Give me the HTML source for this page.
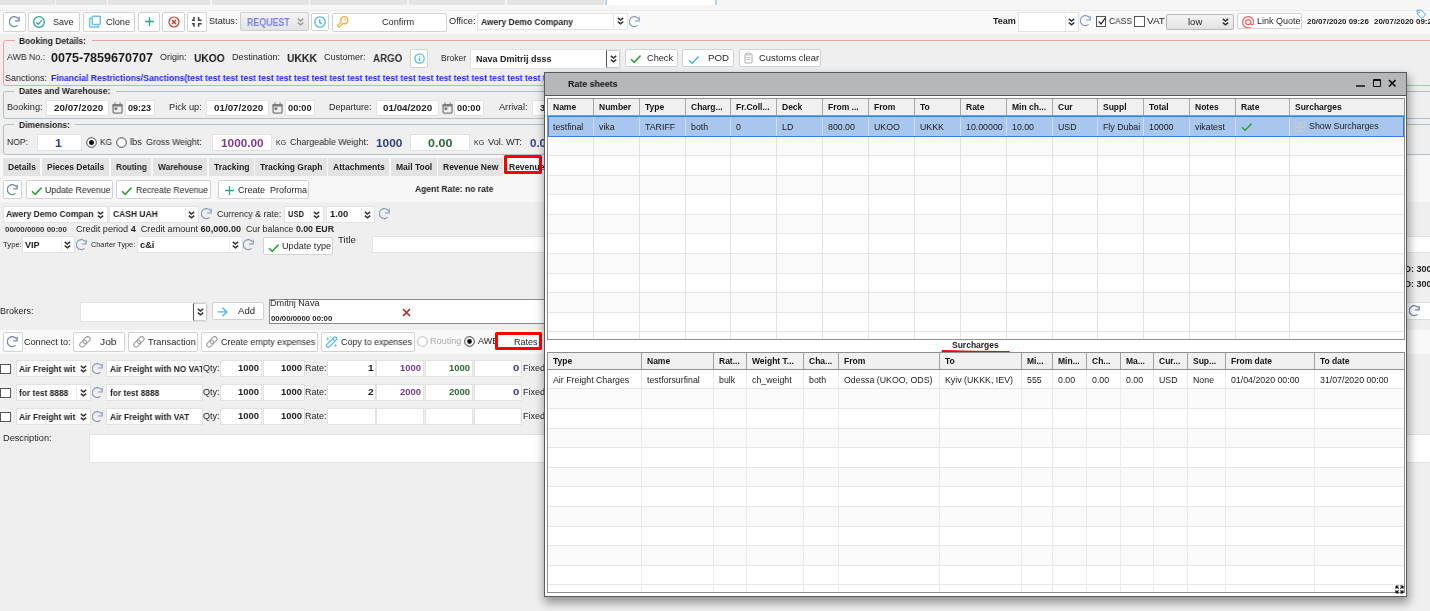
<!DOCTYPE html>
<html><head><meta charset="utf-8"><style>
html,body{margin:0;padding:0;}
body{width:1430px;height:611px;overflow:hidden;position:relative;background:#efefef;font-family:"Liberation Sans",sans-serif;}
#root{position:absolute;left:0;top:0;width:1430px;height:611px;overflow:hidden;}
#root>div,#root>span,#root>svg{position:absolute;}
.t{white-space:nowrap;transform-origin:0 50%;will-change:transform;}
</style></head><body><div id="root">
<div style="left:0.0px;top:0.0px;width:1430.0px;height:611.0px;background:#efefef"></div>
<div style="left:0.0px;top:0.0px;width:1430.0px;height:10.0px;background:#f6f6f6"></div>
<div style="left:0.0px;top:9.5px;width:1430.0px;height:1.0px;background:#ebebeb"></div>
<div style="left:0.0px;top:0.0px;width:55.0px;height:4.5px;background:#e4e4e4"></div>
<div style="left:56.0px;top:0.0px;width:50.5px;height:4.5px;background:#e4e4e4"></div>
<div style="left:108.0px;top:0.0px;width:102.0px;height:4.5px;background:#e4e4e4"></div>
<div style="left:212.0px;top:0.0px;width:96.5px;height:4.5px;background:#e4e4e4"></div>
<div style="left:310.0px;top:0.0px;width:97.0px;height:4.5px;background:#e4e4e4"></div>
<div style="left:408.5px;top:0.0px;width:96.5px;height:4.5px;background:#e4e4e4"></div>
<div style="left:507.0px;top:0.0px;width:97.0px;height:4.5px;background:#e4e4e4"></div>
<div style="left:605.0px;top:0.0px;width:112.0px;height:4.5px;background:#fff;border-left:2px solid #a8d8f6;border-right:2px solid #a8d8f6;box-sizing:border-box"></div>
<div style="left:0.0px;top:10.5px;width:1430.0px;height:23.0px;background:#f9f9f9"></div>
<div style="left:3.0px;top:12.0px;width:22.5px;height:19.5px;background:#fff;border:1px solid #d2d2d2;border-radius:2px;box-sizing:border-box"></div>
<svg style="left:8.5px;top:16.0px;width:12px;height:12px" viewBox="0 0 12 12"><path d="M8.6 9.4A5 5 0 1 1 9.7 3.2" fill="none" stroke="#7385b0" stroke-width="1.25"/><path d="M10.2 0.8V4.9H6.1" fill="none" stroke="#7385b0" stroke-width="1.25"/></svg>
<div style="left:28.0px;top:12.0px;width:52.0px;height:19.5px;background:#fff;border:1px solid #d2d2d2;border-radius:2px;box-sizing:border-box"></div>
<svg style="left:33.4px;top:15.7px;width:12px;height:12px" viewBox="0 0 12 12"><circle cx="6" cy="6" r="5.3" fill="none" stroke="#2aa59a" stroke-width="1.3"/><path d="M3.2 6.3L5.2 8.2 8.7 4.4" fill="none" stroke="#2aa59a" stroke-width="1.3"/></svg>
<span class="t" id="t1" style="transform:scaleX(0.979);margin-left:-0.5px;left:53.0px;top:16.5px;font-size:9px;line-height:11.7px;font-weight:400;color:#262626;">Save</span>
<div style="left:83.0px;top:12.0px;width:52.0px;height:19.5px;background:#fff;border:1px solid #d2d2d2;border-radius:2px;box-sizing:border-box"></div>
<svg style="left:87.7px;top:15.3px;width:13px;height:13px" viewBox="0 0 13 13"><rect x="4.2" y="1.2" width="8.1" height="8.3" rx="0.9" fill="none" stroke="#6cc0f5" stroke-width="1.5"/><path d="M3.6 3.2H1.6V11.2c0 .6.3.9.9.9H10.4V10.2" fill="none" stroke="#6cc0f5" stroke-width="1.5"/></svg>
<span class="t" id="t2" style="transform:scaleX(1.024);margin-left:-0.5px;left:106.0px;top:16.5px;font-size:9px;line-height:11.7px;font-weight:400;color:#262626;">Clone</span>
<div style="left:137.5px;top:12.0px;width:22.1px;height:19.5px;background:#fff;border:1px solid #d2d2d2;border-radius:2px;box-sizing:border-box"></div>
<svg style="left:143.5px;top:16.0px;width:11px;height:11px" viewBox="0 0 11 11"><path d="M5.5 1V10M1 5.5H10" stroke="#26a69a" stroke-width="1.3"/></svg>
<div style="left:162.0px;top:12.0px;width:22.5px;height:19.5px;background:#fff;border:1px solid #d2d2d2;border-radius:2px;box-sizing:border-box"></div>
<svg style="left:167.5px;top:16.0px;width:12px;height:12px" viewBox="0 0 12 12"><circle cx="6" cy="6" r="5" fill="none" stroke="#c0392b" stroke-width="1.2"/><path d="M4 4L8 8M8 4L4 8" stroke="#c0392b" stroke-width="1.4"/></svg>
<div style="left:187.0px;top:12.0px;width:19.5px;height:19.5px;background:#fff;border:1px solid #d2d2d2;border-radius:2px;box-sizing:border-box"></div>
<svg style="left:190.0px;top:15.0px;width:14px;height:14px" viewBox="0 0 14 14"><path d="M4 2V5.2H1.9M8.6 2V5.2H11.7M1.9 8.7H4V11.7M11.7 8.7H8.6V11.7" fill="none" stroke="#444" stroke-width="1.5"/></svg>
<span class="t" id="t3" style="transform:scaleX(1.017);margin-left:-0.5px;left:209.0px;top:15.5px;font-size:9px;line-height:11.7px;font-weight:400;color:#262626;">Status:</span>
<div style="left:239.6px;top:12.2px;width:69.2px;height:19.3px;background:linear-gradient(#f4f4f5,#e3e3e6);border:1px solid #cdcdcd;border-radius:2px;box-sizing:border-box"></div>
<span class="t" id="t4" style="transform:scaleX(0.883);margin-left:-0.6px;left:247.5px;top:15.5px;font-size:10px;line-height:13.0px;font-weight:700;color:#8184e0;">REQUEST</span>
<svg style="left:297.0px;top:18.0px;width:7px;height:8px" viewBox="0 0 7 8"><path d="M0.8 0.9L3.5 3.1 6.2 0.9M0.8 4.6L3.5 6.8 6.2 4.6" fill="none" stroke="#999" stroke-width="1.5"/></svg>
<div style="left:311.3px;top:12.5px;width:17.4px;height:18.5px;background:#fff;border:1px solid #d2d2d2;border-radius:2px;box-sizing:border-box"></div>
<svg style="left:313.8px;top:15.8px;width:12px;height:12px" viewBox="0 0 12 12"><circle cx="6" cy="6" r="5.2" fill="none" stroke="#4fb6f0" stroke-width="1.3"/><path d="M5.7 3.2V6.6L7.8 8.0" fill="none" stroke="#4fb6f0" stroke-width="1.4"/></svg>
<div style="left:331.5px;top:12.5px;width:115.0px;height:19.0px;background:#fff;border:1px solid #d2d2d2;border-radius:2px;box-sizing:border-box"></div>
<svg style="left:336.0px;top:14.0px;width:14px;height:14px" viewBox="0 0 14 14"><path d="M7.6 7.2L3.0 11.8" stroke="#ffa53a" stroke-width="3.6" stroke-linecap="round"/><circle cx="8.3" cy="6.2" r="4.2" fill="#ffa53a"/><path d="M7.6 7.2L3.0 11.8" stroke="#fff" stroke-width="1.2" stroke-linecap="round"/><circle cx="8.3" cy="6.2" r="2.9" fill="#fff"/><circle cx="9.1" cy="5.4" r="0.8" fill="#ffa53a"/></svg>
<span class="t" id="t5" style="transform:scaleX(1.018);margin-left:-0.5px;left:382.0px;top:16.5px;font-size:9px;line-height:11.7px;font-weight:400;color:#262626;">Confirm</span>
<span class="t" id="t6" style="transform:scaleX(1.024);margin-left:-0.5px;left:449.6px;top:15.5px;font-size:9px;line-height:11.7px;font-weight:400;color:#262626;">Office:</span>
<div style="left:477.1px;top:12.6px;width:151.2px;height:17.5px;background:#fff;border:1px solid #e2e2e2;box-sizing:border-box"></div>
<div style="left:613.3px;top:14.3px;width:1.0px;height:14.1px;background:#e6e6e6"></div>
<svg style="left:617.0px;top:17.4px;width:7px;height:8px" viewBox="0 0 7 8"><path d="M0.8 0.9L3.5 3.1 6.2 0.9M0.8 4.6L3.5 6.8 6.2 4.6" fill="none" stroke="#333" stroke-width="1.5"/></svg>
<span class="t" id="t7" style="transform:scaleX(0.941);margin-left:-0.5px;left:481.0px;top:16.5px;font-size:9px;line-height:11.7px;font-weight:700;color:#222;">Awery Demo Company</span>
<svg style="left:628.5px;top:15.7px;width:12px;height:12px" viewBox="0 0 12 12"><path d="M8.6 9.4A5 5 0 1 1 9.7 3.2" fill="none" stroke="#8493bb" stroke-width="1.05"/><path d="M10.2 0.8V4.9H6.1" fill="none" stroke="#8493bb" stroke-width="1.05"/></svg>
<span class="t" id="t8" style="transform:scaleX(1.002);margin-left:-0.5px;left:993.5px;top:15.5px;font-size:9px;line-height:11.7px;font-weight:700;color:#222;">Team</span>
<div style="left:1017.6px;top:11.8px;width:61.3px;height:20.4px;background:#fff;border:1px solid #e2e2e2;box-sizing:border-box"></div>
<div style="left:1064.5px;top:13.5px;width:1.0px;height:17.0px;background:#e6e6e6"></div>
<svg style="left:1067.8px;top:18.0px;width:7px;height:8px" viewBox="0 0 7 8"><path d="M0.8 0.9L3.5 3.1 6.2 0.9M0.8 4.6L3.5 6.8 6.2 4.6" fill="none" stroke="#333" stroke-width="1.5"/></svg>
<svg style="left:1079.5px;top:15.0px;width:12px;height:12px" viewBox="0 0 12 12"><path d="M8.6 9.4A5 5 0 1 1 9.7 3.2" fill="none" stroke="#8493bb" stroke-width="1.05"/><path d="M10.2 0.8V4.9H6.1" fill="none" stroke="#8493bb" stroke-width="1.05"/></svg>
<div style="left:1095.8px;top:16.4px;width:10.2px;height:10.4px;background:#fff;border:1px solid #555;box-sizing:border-box"></div>
<svg style="left:1096.5px;top:16.0px;width:10px;height:10px" viewBox="0 0 10 10"><path d="M1.8 5.3L4 8 8.6 1.6" fill="none" stroke="#222" stroke-width="1.2"/></svg>
<span class="t" id="t9" style="transform:scaleX(0.941);margin-left:-0.5px;left:1109.0px;top:15.5px;font-size:9px;line-height:11.7px;font-weight:400;color:#262626;">CASS</span>
<div style="left:1134.0px;top:16.4px;width:11.0px;height:10.4px;background:#fff;border:1px solid #555;box-sizing:border-box"></div>
<span class="t" id="t10" style="transform:scaleX(1.106);margin-left:-0.5px;left:1147.0px;top:15.5px;font-size:9px;line-height:11.7px;font-weight:400;color:#262626;">VAT</span>
<div style="left:1166.0px;top:13.5px;width:67.6px;height:16.0px;background:linear-gradient(#f4f4f4,#e2e2e2);border:1px solid #b9b9b9;border-radius:2px;box-sizing:border-box"></div>
<span class="t" id="t11" style="transform:scaleX(1.057);margin-left:-0.5px;left:1188.3px;top:16.5px;font-size:9px;line-height:11.7px;font-weight:400;color:#222;">low</span>
<svg style="left:1222.0px;top:17.5px;width:7px;height:8px" viewBox="0 0 7 8"><path d="M0.8 0.9L3.5 3.1 6.2 0.9M0.8 4.6L3.5 6.8 6.2 4.6" fill="none" stroke="#333" stroke-width="1.5"/></svg>
<div style="left:1236.5px;top:13.4px;width:65.9px;height:16.0px;background:#fff;border:1px solid #d2d2d2;border-radius:2px;box-sizing:border-box"></div>
<svg style="left:1241.6px;top:15.5px;width:12.4px;height:12.4px" viewBox="2 2 20 20"><path fill="#f25c5c" d="M12 2C6.48 2 2 6.48 2 12s4.48 10 10 10h5v-2h-5c-4.34 0-8-3.66-8-8s3.66-8 8-8 8 3.66 8 8v1.43c0 .79-.71 1.57-1.5 1.57s-1.5-.78-1.5-1.57V12c0-2.76-2.24-5-5-5s-5 2.24-5 5 2.24 5 5 5c1.38 0 2.64-.56 3.540-1.47.65.89 1.77 1.47 2.96 1.47 1.97 0 3.5-1.6 3.5-3.57V12c0-5.52-4.48-10-10-10zm0 13c-1.66 0-3-1.34-3-3s1.34-3 3-3 3 1.340 3 3-1.34 3-3 3z"/></svg>
<span class="t" id="t12" style="transform:scaleX(0.990);margin-left:-0.5px;left:1257.0px;top:15.5px;font-size:9px;line-height:11.7px;font-weight:400;color:#262626;">Link Quote</span>
<span class="t" id="t13" style="transform:scaleX(1.052);margin-left:-0.4px;left:1307.0px;top:16.5px;font-size:7.5px;line-height:9.8px;font-weight:700;color:#222;">20/07/2020 09:26</span>
<span class="t" id="t14" style="transform:scaleX(1.059);margin-left:-0.4px;left:1374.6px;top:16.5px;font-size:7.5px;line-height:9.8px;font-weight:700;color:#222;">20/07/2020 09:26</span>
<svg style="left:1416.0px;top:8.5px;width:11px;height:10px" viewBox="0 0 11 10"><path d="M1 1.2H5.3L9.8 5.6 5.9 9.5 1.4 5.1Z" fill="none" stroke="#42a5f5" stroke-width="1"/><circle cx="3.4" cy="3.4" r="0.7" fill="#42a5f5"/></svg>
<div style="left:3.0px;top:39.9px;width:1437.0px;height:46.0px;border:1px solid #eea3a3;border-radius:3px;box-sizing:border-box"></div>
<div style="left:14.5px;top:38.0px;width:77.5px;height:5.0px;background:#efefef"></div>
<span class="t" id="t15" style="transform:scaleX(0.942);margin-left:-0.5px;left:19.8px;top:35.5px;font-size:9px;line-height:11.7px;font-weight:700;color:#222;">Booking Details:</span>
<span class="t" id="t16" style="transform:scaleX(0.972);margin-left:-0.5px;left:7.0px;top:51.5px;font-size:9px;line-height:11.7px;font-weight:400;color:#262626;">AWB No.:</span>
<span class="t" id="t17" style="transform:scaleX(1.005);margin-left:-0.8px;left:52.0px;top:49.5px;font-size:12.5px;line-height:16.2px;font-weight:700;color:#1a1a1a;">0075-7859670707</span>
<span class="t" id="t18" style="transform:scaleX(0.995);margin-left:-0.5px;left:160.7px;top:51.5px;font-size:9px;line-height:11.7px;font-weight:400;color:#262626;">Origin:</span>
<span class="t" id="t19" style="transform:scaleX(0.892);margin-left:-0.7px;left:194.6px;top:50.5px;font-size:11.5px;line-height:15.0px;font-weight:700;color:#1a1a1a;">UKOO</span>
<span class="t" id="t20" style="transform:scaleX(1.012);margin-left:-0.5px;left:232.6px;top:51.5px;font-size:9px;line-height:11.7px;font-weight:400;color:#262626;">Destination:</span>
<span class="t" id="t21" style="transform:scaleX(0.899);margin-left:-0.7px;left:288.0px;top:50.5px;font-size:11.5px;line-height:15.0px;font-weight:700;color:#1a1a1a;">UKKK</span>
<span class="t" id="t22" style="transform:scaleX(0.992);margin-left:-0.5px;left:324.9px;top:51.5px;font-size:9px;line-height:11.7px;font-weight:400;color:#262626;">Customer:</span>
<span class="t" id="t23" style="transform:scaleX(0.852);margin-left:-0.7px;left:374.0px;top:50.5px;font-size:11.5px;line-height:15.0px;font-weight:700;color:#333;">ARGO</span>
<div style="left:410.2px;top:49.3px;width:17.4px;height:18.3px;background:#fff;border:1px solid #d2d2d2;border-radius:2px;box-sizing:border-box"></div>
<svg style="left:413.7px;top:53.1px;width:11px;height:11px" viewBox="0 0 11 11"><circle cx="5.5" cy="5.5" r="4.7" fill="none" stroke="#56bdf0" stroke-width="1.3"/><path d="M5.5 4.7V8.2" stroke="#56bdf0" stroke-width="1.5"/><circle cx="5.5" cy="3.3" r="0.8" fill="#56bdf0"/></svg>
<span class="t" id="t24" style="transform:scaleX(0.991);margin-left:-0.5px;left:441.7px;top:52.5px;font-size:8.5px;line-height:11.1px;font-weight:400;color:#262626;">Broker</span>
<div style="left:469.9px;top:49.1px;width:151.0px;height:19.6px;background:#fff;border:1px solid #e2e2e2;box-sizing:border-box"></div>
<div style="left:606.2px;top:49.8px;width:14.0px;height:18.2px;border:1px solid #cfcfcf;border-left:1px solid #555;border-radius:0 2px 2px 0;box-sizing:border-box;background:#fff"></div>
<svg style="left:609.7px;top:54.9px;width:7px;height:8px" viewBox="0 0 7 8"><path d="M0.8 0.9L3.5 3.1 6.2 0.9M0.8 4.6L3.5 6.8 6.2 4.6" fill="none" stroke="#333" stroke-width="1.5"/></svg>
<span class="t" id="t25" style="transform:scaleX(1.000);margin-left:-0.5px;left:476.5px;top:53.5px;font-size:9px;line-height:11.7px;font-weight:700;color:#222;">Nava Dmitrij dsss</span>
<div style="left:625.0px;top:49.2px;width:52.6px;height:18.2px;background:#fff;border:1px solid #d2d2d2;border-radius:2px;box-sizing:border-box"></div>
<svg style="left:630.3px;top:52.6px;width:11px;height:11px" viewBox="0 0 11 11"><path d="M1 6.2L4.2 9.3 10.6 2.6" fill="none" stroke="#2aa336" stroke-width="1.6"/></svg>
<span class="t" id="t26" style="transform:scaleX(1.022);margin-left:-0.5px;left:647.0px;top:52.5px;font-size:9px;line-height:11.7px;font-weight:400;color:#262626;">Check</span>
<div style="left:682.3px;top:49.2px;width:52.0px;height:18.2px;background:#fff;border:1px solid #d2d2d2;border-radius:2px;box-sizing:border-box"></div>
<svg style="left:688.0px;top:53.5px;width:11px;height:11px" viewBox="0 0 11 11"><path d="M1 6.2L4.2 9.3 10.6 2.6" fill="none" stroke="#4fb3ef" stroke-width="1.4"/></svg>
<span class="t" id="t27" style="transform:scaleX(1.080);margin-left:-0.5px;left:708.0px;top:52.5px;font-size:9px;line-height:11.7px;font-weight:400;color:#262626;">POD</span>
<div style="left:739.0px;top:49.2px;width:81.8px;height:18.2px;background:#fff;border:1px solid #d2d2d2;border-radius:2px;box-sizing:border-box"></div>
<svg style="left:743.5px;top:52.0px;width:9px;height:12px" viewBox="0 0 9 12"><rect x="1" y="2" width="7" height="9" rx="0.8" fill="none" stroke="#aaa" stroke-width="1"/><rect x="3" y="1" width="3" height="2" fill="#fff" stroke="#aaa" stroke-width="0.8"/><path d="M2.6 5.5H6.4M2.6 7.5H6.4" stroke="#aaa" stroke-width="0.8"/></svg>
<span class="t" id="t28" style="transform:scaleX(1.045);margin-left:-0.5px;left:759.0px;top:52.5px;font-size:9px;line-height:11.7px;font-weight:400;color:#262626;">Customs clear</span>
<span class="t" id="t29" style="transform:scaleX(1.001);margin-left:-0.5px;left:5.0px;top:72.5px;font-size:9px;line-height:11.7px;font-weight:400;color:#262626;">Sanctions:</span>
<span class="t" id="t30" style="left:51.0px;top:72.5px;font-size:9px;line-height:11.7px;font-weight:700;color:#1f1fff;white-space:nowrap;transform:scaleX(0.96)">Financial Restrictions/Sanctions(test test test test test test test test test test test test test test test test test test test test test test test test test</span>
<div style="left:3.0px;top:91.3px;width:1437.0px;height:27.8px;border:1px solid #b3bec6;border-radius:3px;box-sizing:border-box"></div>
<div style="left:14.0px;top:89.0px;width:102.0px;height:5.0px;background:#efefef"></div>
<span class="t" id="t31" style="transform:scaleX(0.943);margin-left:-0.5px;left:19.6px;top:85.5px;font-size:9px;line-height:11.7px;font-weight:700;color:#222;">Dates and Warehouse:</span>
<span class="t" id="t32" style="transform:scaleX(1.016);margin-left:-0.5px;left:7.0px;top:101.5px;font-size:9px;line-height:11.7px;font-weight:400;color:#262626;">Booking:</span>
<div style="left:46.3px;top:100.3px;width:63.1px;height:15.7px;background:#fff;border:1px solid #e2e2e2;box-sizing:border-box"></div>
<span class="t" id="t33" style="transform:scaleX(1.090);margin-left:-0.5px;left:54.0px;top:102.5px;font-size:9px;line-height:11.7px;font-weight:700;color:#222;">20/07/2020</span>
<svg style="left:112.0px;top:102.0px;width:11px;height:12px" viewBox="0 0 11 12"><rect x="1.1" y="2.6" width="8.9" height="8.5" rx="1" fill="none" stroke="#7d7d7d" stroke-width="1.3"/><rect x="0.6" y="2" width="9.9" height="2.5" fill="#7d7d7d"/><path d="M3 0.3V2.5M8.1 0.3V2.5" stroke="#7d7d7d" stroke-width="1"/><rect x="2.5" y="5.4" width="2.8" height="2.6" fill="#7d7d7d"/></svg>
<div style="left:125.0px;top:100.3px;width:29.7px;height:15.7px;background:#fff;border:1px solid #e2e2e2;box-sizing:border-box"></div>
<span class="t" id="t34" style="transform:scaleX(1.002);margin-left:-0.5px;left:128.3px;top:102.5px;font-size:9px;line-height:11.7px;font-weight:700;color:#222;">09:23</span>
<span class="t" id="t35" style="transform:scaleX(1.021);margin-left:-0.5px;left:169.4px;top:101.5px;font-size:9px;line-height:11.7px;font-weight:400;color:#262626;">Pick up:</span>
<div style="left:206.3px;top:100.3px;width:63.2px;height:15.7px;background:#fff;border:1px solid #e2e2e2;box-sizing:border-box"></div>
<span class="t" id="t36" style="transform:scaleX(1.090);margin-left:-0.5px;left:214.0px;top:102.5px;font-size:9px;line-height:11.7px;font-weight:700;color:#222;">01/07/2020</span>
<svg style="left:271.8px;top:102.0px;width:11px;height:12px" viewBox="0 0 11 12"><rect x="1.1" y="2.6" width="8.9" height="8.5" rx="1" fill="none" stroke="#7d7d7d" stroke-width="1.3"/><rect x="0.6" y="2" width="9.9" height="2.5" fill="#7d7d7d"/><path d="M3 0.3V2.5M8.1 0.3V2.5" stroke="#7d7d7d" stroke-width="1"/><rect x="2.5" y="5.4" width="2.8" height="2.6" fill="#7d7d7d"/></svg>
<div style="left:284.9px;top:100.3px;width:29.8px;height:15.7px;background:#fff;border:1px solid #e2e2e2;box-sizing:border-box"></div>
<span class="t" id="t37" style="transform:scaleX(1.024);margin-left:-0.5px;left:288.0px;top:102.5px;font-size:9px;line-height:11.7px;font-weight:700;color:#222;">00:00</span>
<span class="t" id="t38" style="transform:scaleX(0.992);margin-left:-0.5px;left:329.6px;top:101.5px;font-size:9px;line-height:11.7px;font-weight:400;color:#262626;">Departure:</span>
<div style="left:375.9px;top:100.3px;width:63.1px;height:15.7px;background:#fff;border:1px solid #e2e2e2;box-sizing:border-box"></div>
<span class="t" id="t39" style="transform:scaleX(1.090);margin-left:-0.5px;left:383.5px;top:102.5px;font-size:9px;line-height:11.7px;font-weight:700;color:#222;">01/04/2020</span>
<svg style="left:441.6px;top:102.0px;width:11px;height:12px" viewBox="0 0 11 12"><rect x="1.1" y="2.6" width="8.9" height="8.5" rx="1" fill="none" stroke="#7d7d7d" stroke-width="1.3"/><rect x="0.6" y="2" width="9.9" height="2.5" fill="#7d7d7d"/><path d="M3 0.3V2.5M8.1 0.3V2.5" stroke="#7d7d7d" stroke-width="1"/><rect x="2.5" y="5.4" width="2.8" height="2.6" fill="#7d7d7d"/></svg>
<div style="left:454.3px;top:100.3px;width:30.1px;height:15.7px;background:#fff;border:1px solid #e2e2e2;box-sizing:border-box"></div>
<span class="t" id="t40" style="transform:scaleX(1.024);margin-left:-0.5px;left:457.8px;top:102.5px;font-size:9px;line-height:11.7px;font-weight:700;color:#222;">00:00</span>
<span class="t" id="t41" style="transform:scaleX(1.017);margin-left:-0.5px;left:499.4px;top:101.5px;font-size:9px;line-height:11.7px;font-weight:400;color:#262626;">Arrival:</span>
<div style="left:532.2px;top:100.3px;width:68.5px;height:15.7px;background:#fff;border:1px solid #e2e2e2;box-sizing:border-box"></div>
<span class="t" id="t42" style="left:539.5px;top:102.5px;font-size:9px;line-height:11.7px;font-weight:700;color:#222;">31/07/2020</span>
<div style="left:3.0px;top:124.4px;width:1437.0px;height:30.4px;border:1px solid #b3bec6;border-radius:3px;box-sizing:border-box"></div>
<div style="left:14.0px;top:122.0px;width:61.0px;height:5.0px;background:#efefef"></div>
<span class="t" id="t43" style="transform:scaleX(0.944);margin-left:-0.5px;left:19.6px;top:119.5px;font-size:9px;line-height:11.7px;font-weight:700;color:#222;">Dimensions:</span>
<span class="t" id="t44" style="transform:scaleX(0.958);margin-left:-0.5px;left:7.0px;top:136.5px;font-size:9px;line-height:11.7px;font-weight:400;color:#262626;">NOP:</span>
<div style="left:37.1px;top:134.3px;width:44.5px;height:16.6px;background:#fff;border:1px solid #e2e2e2;box-sizing:border-box"></div>
<span class="t" id="t45" style="transform:scaleX(1.113);margin-left:-0.7px;left:56.0px;top:135.5px;font-size:11px;line-height:14.3px;font-weight:700;color:#2e3d8f;">1</span>
<svg style="left:86.0px;top:136.5px;width:11px;height:11px" viewBox="0 0 11 11"><circle cx="5.5" cy="5.5" r="4.8" fill="#fff" stroke="#333" stroke-width="0.9"/><circle cx="5.5" cy="5.5" r="2.5" fill="#111"/></svg>
<span class="t" id="t46" style="transform:scaleX(0.928);margin-left:-0.5px;left:100.0px;top:136.5px;font-size:9px;line-height:11.7px;font-weight:400;color:#262626;">KG</span>
<svg style="left:116.0px;top:136.5px;width:11px;height:11px" viewBox="0 0 11 11"><circle cx="5.5" cy="5.5" r="4.8" fill="#fff" stroke="#333" stroke-width="0.9"/></svg>
<span class="t" id="t47" style="transform:scaleX(1.049);margin-left:-0.5px;left:130.0px;top:136.5px;font-size:9px;line-height:11.7px;font-weight:400;color:#262626;">lbs</span>
<span class="t" id="t48" style="transform:scaleX(0.983);margin-left:-0.5px;left:146.9px;top:136.5px;font-size:9px;line-height:11.7px;font-weight:400;color:#262626;">Gross Weight:</span>
<div style="left:212.1px;top:134.3px;width:59.8px;height:16.6px;background:#fff;border:1px solid #e2e2e2;box-sizing:border-box"></div>
<span class="t" id="t49" style="transform:scaleX(1.027);margin-left:-0.7px;left:221.5px;top:135.5px;font-size:11.5px;line-height:15.0px;font-weight:700;color:#7d3a8a;">1000.00</span>
<span class="t" id="t50" style="transform:scaleX(1.072);margin-left:-0.4px;left:276.7px;top:138.5px;font-size:6.5px;line-height:8.5px;font-weight:400;color:#262626;">KG</span>
<span class="t" id="t51" style="transform:scaleX(0.987);margin-left:-0.5px;left:290.5px;top:136.5px;font-size:9px;line-height:11.7px;font-weight:400;color:#262626;">Chargeable Weight:</span>
<span class="t" id="t52" style="transform:scaleX(1.027);margin-left:-0.7px;left:376.6px;top:135.5px;font-size:11.5px;line-height:15.0px;font-weight:700;color:#2e3d8f;">1000</span>
<div style="left:409.8px;top:134.3px;width:60.1px;height:16.6px;background:#fff;border:1px solid #e2e2e2;box-sizing:border-box"></div>
<span class="t" id="t53" style="transform:scaleX(1.089);margin-left:-0.7px;left:428.5px;top:135.5px;font-size:11.5px;line-height:15.0px;font-weight:700;color:#2a683a;">0.00</span>
<span class="t" id="t54" style="transform:scaleX(1.093);margin-left:-0.4px;left:474.5px;top:138.5px;font-size:6.5px;line-height:8.5px;font-weight:400;color:#262626;">KG</span>
<span class="t" id="t55" style="transform:scaleX(1.023);margin-left:-0.5px;left:488.8px;top:136.5px;font-size:9px;line-height:11.7px;font-weight:400;color:#262626;">Vol. WT:</span>
<span class="t" id="t56" style="left:530.3px;top:135.5px;font-size:11.5px;line-height:15.0px;font-weight:700;color:#2e3d8f;">0.00</span>
<div style="left:0.0px;top:155.0px;width:1430.0px;height:46.5px;background:#f7f7f7"></div>
<div style="left:3.0px;top:158.0px;width:37.0px;height:17.8px;background:#e3e3e3"></div>
<span class="t" id="t57" style="transform:scaleX(0.987);margin-left:-0.5px;left:8.5px;top:161.5px;font-size:8.5px;line-height:11.1px;font-weight:700;color:#222;">Details</span>
<div style="left:42.0px;top:158.0px;width:66.7px;height:17.8px;background:#e3e3e3"></div>
<span class="t" id="t58" style="transform:scaleX(1.001);margin-left:-0.5px;left:47.5px;top:161.5px;font-size:8.5px;line-height:11.1px;font-weight:700;color:#222;">Pieces Details</span>
<div style="left:110.6px;top:158.0px;width:40.2px;height:17.8px;background:#e3e3e3"></div>
<span class="t" id="t59" style="transform:scaleX(0.957);margin-left:-0.5px;left:116.1px;top:161.5px;font-size:8.5px;line-height:11.1px;font-weight:700;color:#222;">Routing</span>
<div style="left:152.7px;top:158.0px;width:53.9px;height:17.8px;background:#e3e3e3"></div>
<span class="t" id="t60" style="transform:scaleX(0.976);margin-left:-0.5px;left:158.2px;top:161.5px;font-size:8.5px;line-height:11.1px;font-weight:700;color:#222;">Warehouse</span>
<div style="left:209.0px;top:158.0px;width:45.0px;height:17.8px;background:#e3e3e3"></div>
<span class="t" id="t61" style="transform:scaleX(1.016);margin-left:-0.5px;left:214.5px;top:161.5px;font-size:8.5px;line-height:11.1px;font-weight:700;color:#222;">Tracking</span>
<div style="left:255.2px;top:158.0px;width:71.4px;height:17.8px;background:#e3e3e3"></div>
<span class="t" id="t62" style="transform:scaleX(0.993);margin-left:-0.5px;left:260.7px;top:161.5px;font-size:8.5px;line-height:11.1px;font-weight:700;color:#222;">Tracking Graph</span>
<div style="left:328.2px;top:158.0px;width:61.3px;height:17.8px;background:#e3e3e3"></div>
<span class="t" id="t63" style="transform:scaleX(1.007);margin-left:-0.5px;left:333.7px;top:161.5px;font-size:8.5px;line-height:11.1px;font-weight:700;color:#222;">Attachments</span>
<div style="left:391.2px;top:158.0px;width:45.5px;height:17.8px;background:#e3e3e3"></div>
<span class="t" id="t64" style="transform:scaleX(0.995);margin-left:-0.5px;left:396.7px;top:161.5px;font-size:8.5px;line-height:11.1px;font-weight:700;color:#222;">Mail Tool</span>
<div style="left:438.4px;top:158.0px;width:64.4px;height:17.8px;background:#e3e3e3"></div>
<span class="t" id="t65" style="transform:scaleX(0.993);margin-left:-0.5px;left:443.9px;top:161.5px;font-size:8.5px;line-height:11.1px;font-weight:700;color:#222;">Revenue New</span>
<div style="left:504.0px;top:158.0px;width:56.0px;height:17.8px;background:#fafafa"></div>
<span class="t" id="t66" style="left:509.0px;top:161.5px;font-size:8.5px;line-height:11.1px;font-weight:700;color:#222;">Revenue</span>
<div style="left:503.8px;top:155.2px;width:38.2px;height:18.5px;border:3px solid #ff0000;border-radius:1.5px;box-sizing:border-box"></div>
<div style="left:3.3px;top:180.3px;width:18.7px;height:19.0px;background:#fff;border:1px solid #d2d2d2;border-radius:2px;box-sizing:border-box"></div>
<svg style="left:7.2px;top:183.9px;width:12px;height:12px" viewBox="0 0 12 12"><path d="M8.6 9.4A5 5 0 1 1 9.7 3.2" fill="none" stroke="#7385b0" stroke-width="1.25"/><path d="M10.2 0.8V4.9H6.1" fill="none" stroke="#7385b0" stroke-width="1.25"/></svg>
<div style="left:25.5px;top:180.0px;width:87.5px;height:19.3px;background:#fff;border:1px solid #d2d2d2;border-radius:2px;box-sizing:border-box"></div>
<svg style="left:30.5px;top:184.5px;width:11px;height:11px" viewBox="0 0 11 11"><path d="M1 6.2L4.2 9.3 10.6 2.6" fill="none" stroke="#2aa336" stroke-width="1.6"/></svg>
<span class="t" id="t67" style="transform:scaleX(0.971);margin-left:-0.5px;left:45.5px;top:184.5px;font-size:9px;line-height:11.7px;font-weight:400;color:#262626;">Update Revenue</span>
<div style="left:116.0px;top:180.0px;width:94.5px;height:19.3px;background:#fff;border:1px solid #d2d2d2;border-radius:2px;box-sizing:border-box"></div>
<svg style="left:121.0px;top:184.5px;width:11px;height:11px" viewBox="0 0 11 11"><path d="M1 6.2L4.2 9.3 10.6 2.6" fill="none" stroke="#2aa336" stroke-width="1.6"/></svg>
<span class="t" id="t68" style="transform:scaleX(0.960);margin-left:-0.5px;left:136.5px;top:184.5px;font-size:9px;line-height:11.7px;font-weight:400;color:#262626;">Recreate Revenue</span>
<div style="left:218.3px;top:180.0px;width:91.1px;height:19.3px;background:#fff;border:1px solid #d2d2d2;border-radius:2px;box-sizing:border-box"></div>
<svg style="left:224.0px;top:184.5px;width:11px;height:11px" viewBox="0 0 11 11"><path d="M5.5 1V10M1 5.5H10" stroke="#26a69a" stroke-width="1.3"/></svg>
<span class="t" id="t69" style="transform:scaleX(1.001);margin-left:-0.5px;left:238.5px;top:184.5px;font-size:9px;line-height:11.7px;font-weight:400;color:#262626;">Create&nbsp; Proforma</span>
<span class="t" id="t70" style="transform:scaleX(0.944);margin-left:-0.5px;left:415.7px;top:183.5px;font-size:9px;line-height:11.7px;font-weight:700;color:#222;">Agent Rate: no rate</span>
<div style="left:3.1px;top:206.3px;width:104.6px;height:16.4px;background:#fff;border:1px solid #e2e2e2;box-sizing:border-box"></div>
<div style="left:93.7px;top:208.0px;width:1.0px;height:13.0px;background:#ececec"></div>
<svg style="left:96.8px;top:210.5px;width:7px;height:8px" viewBox="0 0 7 8"><path d="M0.8 0.9L3.5 3.1 6.2 0.9M0.8 4.6L3.5 6.8 6.2 4.6" fill="none" stroke="#333" stroke-width="1.5"/></svg>
<span class="t" id="t71" style="transform:scaleX(0.943);margin-left:-0.5px;left:6.3px;top:208.5px;font-size:9px;line-height:11.7px;font-weight:700;color:#222;">Awery Demo Compan</span>
<div style="left:109.3px;top:206.3px;width:90.0px;height:16.4px;background:#fff;border:1px solid #e2e2e2;box-sizing:border-box"></div>
<div style="left:185.3px;top:208.0px;width:1.0px;height:13.0px;background:#ececec"></div>
<svg style="left:188.4px;top:210.5px;width:7px;height:8px" viewBox="0 0 7 8"><path d="M0.8 0.9L3.5 3.1 6.2 0.9M0.8 4.6L3.5 6.8 6.2 4.6" fill="none" stroke="#333" stroke-width="1.5"/></svg>
<span class="t" id="t72" style="transform:scaleX(0.942);margin-left:-0.5px;left:113.0px;top:208.5px;font-size:9px;line-height:11.7px;font-weight:700;color:#222;">CASH UAH</span>
<svg style="left:200.5px;top:208.2px;width:12px;height:12px" viewBox="0 0 12 12"><path d="M8.6 9.4A5 5 0 1 1 9.7 3.2" fill="none" stroke="#8493bb" stroke-width="1.05"/><path d="M10.2 0.8V4.9H6.1" fill="none" stroke="#8493bb" stroke-width="1.05"/></svg>
<span class="t" id="t73" style="transform:scaleX(0.979);margin-left:-0.5px;left:217.7px;top:208.5px;font-size:9px;line-height:11.7px;font-weight:400;color:#262626;">Currency &amp; rate:</span>
<div style="left:284.3px;top:206.3px;width:39.4px;height:16.4px;background:#fff;border:1px solid #e2e2e2;box-sizing:border-box"></div>
<div style="left:309.7px;top:208.0px;width:1.0px;height:13.0px;background:#ececec"></div>
<svg style="left:312.9px;top:210.5px;width:7px;height:8px" viewBox="0 0 7 8"><path d="M0.8 0.9L3.5 3.1 6.2 0.9M0.8 4.6L3.5 6.8 6.2 4.6" fill="none" stroke="#333" stroke-width="1.5"/></svg>
<span class="t" id="t74" style="transform:scaleX(0.846);margin-left:-0.5px;left:288.5px;top:208.5px;font-size:9px;line-height:11.7px;font-weight:700;color:#222;">USD</span>
<div style="left:326.3px;top:206.3px;width:48.4px;height:16.4px;background:#fff;border:1px solid #e2e2e2;box-sizing:border-box"></div>
<div style="left:360.8px;top:208.0px;width:1.0px;height:13.0px;background:#ececec"></div>
<svg style="left:363.9px;top:210.5px;width:7px;height:8px" viewBox="0 0 7 8"><path d="M0.8 0.9L3.5 3.1 6.2 0.9M0.8 4.6L3.5 6.8 6.2 4.6" fill="none" stroke="#333" stroke-width="1.5"/></svg>
<span class="t" id="t75" style="transform:scaleX(1.043);margin-left:-0.5px;left:330.3px;top:208.5px;font-size:9px;line-height:11.7px;font-weight:700;color:#222;">1.00</span>
<svg style="left:378.5px;top:208.2px;width:12px;height:12px" viewBox="0 0 12 12"><path d="M8.6 9.4A5 5 0 1 1 9.7 3.2" fill="none" stroke="#8493bb" stroke-width="1.05"/><path d="M10.2 0.8V4.9H6.1" fill="none" stroke="#8493bb" stroke-width="1.05"/></svg>
<span class="t" id="t76" style="transform:scaleX(1.127);margin-left:-0.4px;left:5.0px;top:224.5px;font-size:7px;line-height:9.1px;font-weight:700;color:#333;">00/00/0000 00:00</span>
<span class="t" id="t77" style="transform:scaleX(1.035);margin-left:-0.5px;left:76.0px;top:223.5px;font-size:8.8px;line-height:11.4px;font-weight:400;color:#262626;">Credit period <b>4</b>&nbsp; Credit amount <b>60,000.00</b></span>
<span class="t" id="t78" style="transform:scaleX(0.995);margin-left:-0.5px;left:246.5px;top:223.5px;font-size:8.8px;line-height:11.4px;font-weight:400;color:#262626;">Cur balance <b>0.00 EUR</b></span>
<span class="t" id="t79" style="transform:scaleX(1.100);margin-left:-0.4px;left:3.0px;top:239.5px;font-size:7px;line-height:9.1px;font-weight:400;color:#262626;">Type:</span>
<div style="left:22.3px;top:236.3px;width:52.4px;height:16.4px;background:#fff;border:1px solid #e2e2e2;box-sizing:border-box"></div>
<div style="left:60.8px;top:238.0px;width:1.0px;height:13.0px;background:#ececec"></div>
<svg style="left:63.9px;top:240.5px;width:7px;height:8px" viewBox="0 0 7 8"><path d="M0.8 0.9L3.5 3.1 6.2 0.9M0.8 4.6L3.5 6.8 6.2 4.6" fill="none" stroke="#333" stroke-width="1.5"/></svg>
<span class="t" id="t80" style="transform:scaleX(1.004);margin-left:-0.5px;left:25.5px;top:239.5px;font-size:9px;line-height:11.7px;font-weight:700;color:#222;">VIP</span>
<svg style="left:76.0px;top:238.7px;width:12px;height:12px" viewBox="0 0 12 12"><path d="M8.6 9.4A5 5 0 1 1 9.7 3.2" fill="none" stroke="#8493bb" stroke-width="1.05"/><path d="M10.2 0.8V4.9H6.1" fill="none" stroke="#8493bb" stroke-width="1.05"/></svg>
<span class="t" id="t81" style="transform:scaleX(1.046);margin-left:-0.4px;left:91.6px;top:239.5px;font-size:7px;line-height:9.1px;font-weight:400;color:#262626;">Charter Type:</span>
<div style="left:137.1px;top:236.3px;width:105.9px;height:16.4px;background:#fff;border:1px solid #e2e2e2;box-sizing:border-box"></div>
<div style="left:228.5px;top:238.0px;width:1.0px;height:13.0px;background:#ececec"></div>
<svg style="left:231.9px;top:240.5px;width:7px;height:8px" viewBox="0 0 7 8"><path d="M0.8 0.9L3.5 3.1 6.2 0.9M0.8 4.6L3.5 6.8 6.2 4.6" fill="none" stroke="#333" stroke-width="1.5"/></svg>
<span class="t" id="t82" style="transform:scaleX(1.026);margin-left:-0.5px;left:140.2px;top:239.5px;font-size:9px;line-height:11.7px;font-weight:700;color:#222;">c&amp;i</span>
<svg style="left:243.3px;top:238.7px;width:12px;height:12px" viewBox="0 0 12 12"><path d="M8.6 9.4A5 5 0 1 1 9.7 3.2" fill="none" stroke="#8493bb" stroke-width="1.05"/><path d="M10.2 0.8V4.9H6.1" fill="none" stroke="#8493bb" stroke-width="1.05"/></svg>
<div style="left:262.6px;top:236.5px;width:70.8px;height:18.9px;background:#fff;border:1px solid #d2d2d2;border-radius:2px;box-sizing:border-box"></div>
<svg style="left:267.5px;top:241.5px;width:11px;height:11px" viewBox="0 0 11 11"><path d="M1 6.2L4.2 9.3 10.6 2.6" fill="none" stroke="#2aa336" stroke-width="1.6"/></svg>
<span class="t" id="t83" style="transform:scaleX(1.011);margin-left:-0.5px;left:282.5px;top:240.5px;font-size:9px;line-height:11.7px;font-weight:400;color:#262626;">Update type</span>
<span class="t" id="t84" style="transform:scaleX(1.078);margin-left:-0.5px;left:338.5px;top:234.5px;font-size:9px;line-height:11.7px;font-weight:400;color:#262626;">Title</span>
<div style="left:372.1px;top:235.9px;width:1068.6px;height:17.1px;background:#fff;border:1px solid #e2e2e2;box-sizing:border-box"></div>
<span class="t" id="t85" style="left:1392.0px;top:263.5px;font-size:9px;line-height:11.7px;font-weight:700;color:#222;">USD: 3000</span>
<span class="t" id="t86" style="left:1392.0px;top:278.5px;font-size:9px;line-height:11.7px;font-weight:700;color:#222;">USD: 3000</span>
<div style="left:1380.0px;top:302.3px;width:60.0px;height:18.0px;background:#fff;border:1px solid #dcdcdc;box-sizing:border-box"></div>
<svg style="left:1409.2px;top:305.0px;width:12px;height:12px" viewBox="0 0 12 12"><path d="M8.6 9.4A5 5 0 1 1 9.7 3.2" fill="none" stroke="#7385b0" stroke-width="1.25"/><path d="M10.2 0.8V4.9H6.1" fill="none" stroke="#7385b0" stroke-width="1.25"/></svg>
<span class="t" id="t87" style="transform:scaleX(0.987);margin-left:-0.5px;left:0.0px;top:305.5px;font-size:9px;line-height:11.7px;font-weight:400;color:#262626;">Brokers:</span>
<div style="left:79.5px;top:301.9px;width:128.0px;height:19.8px;background:#fff;border:1px solid #e2e2e2;box-sizing:border-box"></div>
<div style="left:193.0px;top:302.6px;width:13.8px;height:18.4px;border:1px solid #cfcfcf;border-left:1px solid #555;border-radius:0 2px 2px 0;box-sizing:border-box;background:#fff"></div>
<svg style="left:196.5px;top:307.5px;width:7px;height:8px" viewBox="0 0 7 8"><path d="M0.8 0.9L3.5 3.1 6.2 0.9M0.8 4.6L3.5 6.8 6.2 4.6" fill="none" stroke="#333" stroke-width="1.5"/></svg>
<div style="left:212.3px;top:302.4px;width:51.5px;height:18.0px;background:#fff;border:1px solid #d2d2d2;border-radius:2px;box-sizing:border-box"></div>
<svg style="left:217.3px;top:306.5px;width:11px;height:11px" viewBox="0 0 11 11"><path d="M0.6 4.9H9.8M5.4 0.6L9.8 4.9 5.4 9.2" fill="none" stroke="#4fb8ee" stroke-width="1.4"/></svg>
<span class="t" id="t88" style="transform:scaleX(1.066);margin-left:-0.5px;left:238.5px;top:305.5px;font-size:9px;line-height:11.7px;font-weight:400;color:#262626;">Add</span>
<div style="left:269.2px;top:299.3px;width:1030.8px;height:24.7px;background:#fff;border:1px solid #8c8c8c;box-sizing:border-box"></div>
<span class="t" id="t89" style="transform:scaleX(1.070);margin-left:-0.5px;left:270.0px;top:297.5px;font-size:8.5px;line-height:11.1px;font-weight:400;color:#262626;">Dmitrij Nava</span>
<span class="t" id="t90" style="transform:scaleX(1.117);margin-left:-0.4px;left:271.5px;top:313.5px;font-size:7px;line-height:9.1px;font-weight:700;color:#222;">00/00/0000 00:00</span>
<svg style="left:401.5px;top:307.5px;width:9px;height:9px" viewBox="0 0 9 9"><path d="M1 1L8 8M8 1L1 8" stroke="#b0262a" stroke-width="1.6"/></svg>
<div style="left:0.0px;top:330.0px;width:1430.0px;height:23.8px;background:#f9f9f9"></div>
<div style="left:3.0px;top:332.3px;width:19.7px;height:19.5px;background:#fff;border:1px solid #d2d2d2;border-radius:2px;box-sizing:border-box"></div>
<svg style="left:7.4px;top:336.2px;width:12px;height:12px" viewBox="0 0 12 12"><path d="M8.6 9.4A5 5 0 1 1 9.7 3.2" fill="none" stroke="#7385b0" stroke-width="1.25"/><path d="M10.2 0.8V4.9H6.1" fill="none" stroke="#7385b0" stroke-width="1.25"/></svg>
<span class="t" id="t91" style="transform:scaleX(1.010);margin-left:-0.5px;left:24.8px;top:336.5px;font-size:9px;line-height:11.7px;font-weight:400;color:#262626;">Connect to:</span>
<div style="left:73.3px;top:332.3px;width:52.1px;height:19.5px;background:#fff;border:1px solid #d2d2d2;border-radius:2px;box-sizing:border-box"></div>
<svg style="left:78.5px;top:336.3px;width:12px;height:12px" viewBox="0 0 12 12"><g fill="none" stroke="#a3a3a3" stroke-width="1.2"><rect x="-2.3" y="-3.9" width="4.6" height="7.8" rx="2.3" transform="translate(7.6 4.1) rotate(45)"/><rect x="-2.3" y="-3.9" width="4.6" height="7.8" rx="2.3" transform="translate(4.2 7.6) rotate(45)"/></g></svg>
<span class="t" id="t92" style="transform:scaleX(1.142);margin-left:-0.5px;left:100.0px;top:336.5px;font-size:9px;line-height:11.7px;font-weight:400;color:#262626;">Job</span>
<div style="left:128.0px;top:332.3px;width:69.5px;height:19.5px;background:#fff;border:1px solid #d2d2d2;border-radius:2px;box-sizing:border-box"></div>
<svg style="left:133.3px;top:336.3px;width:12px;height:12px" viewBox="0 0 12 12"><g fill="none" stroke="#a3a3a3" stroke-width="1.2"><rect x="-2.3" y="-3.9" width="4.6" height="7.8" rx="2.3" transform="translate(7.6 4.1) rotate(45)"/><rect x="-2.3" y="-3.9" width="4.6" height="7.8" rx="2.3" transform="translate(4.2 7.6) rotate(45)"/></g></svg>
<span class="t" id="t93" style="transform:scaleX(1.023);margin-left:-0.5px;left:148.3px;top:336.5px;font-size:9px;line-height:11.7px;font-weight:400;color:#262626;">Transaction</span>
<div style="left:201.2px;top:332.3px;width:116.5px;height:19.5px;background:#fff;border:1px solid #d2d2d2;border-radius:2px;box-sizing:border-box"></div>
<svg style="left:206.3px;top:336.3px;width:12px;height:12px" viewBox="0 0 12 12"><g fill="none" stroke="#a3a3a3" stroke-width="1.2"><rect x="-2.3" y="-3.9" width="4.6" height="7.8" rx="2.3" transform="translate(7.6 4.1) rotate(45)"/><rect x="-2.3" y="-3.9" width="4.6" height="7.8" rx="2.3" transform="translate(4.2 7.6) rotate(45)"/></g></svg>
<span class="t" id="t94" style="transform:scaleX(0.993);margin-left:-0.5px;left:221.2px;top:336.5px;font-size:9px;line-height:11.7px;font-weight:400;color:#262626;">Create empty expenses</span>
<div style="left:320.5px;top:332.3px;width:94.1px;height:19.5px;background:#fff;border:1px solid #d2d2d2;border-radius:2px;box-sizing:border-box"></div>
<svg style="left:325.0px;top:335.0px;width:14px;height:14px" viewBox="0 0 14 14"><g transform="translate(6.6 7.1) rotate(45)"><rect x="-1.7" y="-6.6" width="3.4" height="13.2" rx="1.7" fill="none" stroke="#55b9ef" stroke-width="1.25"/><path d="M-1.7 -3.2H1.7" stroke="#55b9ef" stroke-width="1"/></g><path d="M2.6 2.2L3.1 3.4 4.3 3.9 3.1 4.4 2.6 5.6 2.1 4.4 0.9 3.9 2.1 3.4Z" fill="#55b9ef"/><path d="M10.6 8.8L11.1 10 12.3 10.5 11.1 11 10.6 12.2 10.1 11 8.9 10.5 10.1 10Z" fill="#55b9ef"/><circle cx="5.6" cy="1.9" r="0.7" fill="#55b9ef"/></svg>
<span class="t" id="t95" style="transform:scaleX(0.987);margin-left:-0.5px;left:341.0px;top:336.5px;font-size:9px;line-height:11.7px;font-weight:400;color:#262626;">Copy to expenses</span>
<svg style="left:416.5px;top:336.0px;width:11px;height:11px" viewBox="0 0 11 11"><circle cx="5.5" cy="5.5" r="4.8" fill="#fff" stroke="#aaa" stroke-width="0.8"/></svg>
<span class="t" id="t96" style="transform:scaleX(1.008);margin-left:-0.5px;left:430.8px;top:335.5px;font-size:9px;line-height:11.7px;font-weight:400;color:#aaa;">Routing</span>
<svg style="left:463.8px;top:336.0px;width:11px;height:11px" viewBox="0 0 11 11"><circle cx="5.5" cy="5.5" r="4.8" fill="#fff" stroke="#222" stroke-width="0.9"/><circle cx="5.5" cy="5.5" r="2.4" fill="#111"/></svg>
<span class="t" id="t97" style="left:477.7px;top:335.5px;font-size:9px;line-height:11.7px;font-weight:400;color:#222;">AWB</span>
<div style="left:495.3px;top:332.3px;width:47.0px;height:17.5px;background:#fff;border:3px solid #ff0000;border-radius:1.5px;box-sizing:border-box"></div>
<span class="t" id="t98" style="transform:scaleX(0.981);margin-left:-0.5px;left:514.7px;top:336.5px;font-size:9px;line-height:11.7px;font-weight:400;color:#222;">Rates</span>
<div style="left:0.0px;top:363.5px;width:11.0px;height:10.0px;background:#fff;border:1px solid #555;box-sizing:border-box"></div>
<div style="left:15.7px;top:360.3px;width:75.3px;height:16.7px;background:#fff;border:1px solid #e2e2e2;box-sizing:border-box"></div>
<div style="left:76.4px;top:362.0px;width:1.0px;height:13.3px;background:#ececec"></div>
<svg style="left:79.8px;top:364.6px;width:7px;height:8px" viewBox="0 0 7 8"><path d="M0.8 0.9L3.5 3.1 6.2 0.9M0.8 4.6L3.5 6.8 6.2 4.6" fill="none" stroke="#333" stroke-width="1.5"/></svg>
<div style="left:18px;top:362px;width:58px;height:13.3px;overflow:hidden;"><span style="position:absolute;left:0.8px;top:1.50px;font-size:9px;line-height:11.7px;font-weight:700;color:#222;white-space:nowrap;transform:scaleX(0.93);transform-origin:0 50%;will-change:transform">Air Freight wit</span></div>
<svg style="left:91.9px;top:362.6px;width:12px;height:12px" viewBox="0 0 12 12"><path d="M8.6 9.4A5 5 0 1 1 9.7 3.2" fill="none" stroke="#8493bb" stroke-width="1.05"/><path d="M10.2 0.8V4.9H6.1" fill="none" stroke="#8493bb" stroke-width="1.05"/></svg>
<div style="left:106.3px;top:360.3px;width:96.6px;height:16.7px;background:#fff;border:1px solid #e2e2e2;box-sizing:border-box"></div>
<div style="left:109px;top:362px;width:93px;height:13.3px;overflow:hidden;"><span style="position:absolute;left:1px;top:1.50px;font-size:9px;line-height:11.7px;font-weight:700;color:#222;white-space:nowrap;transform:scaleX(0.93);transform-origin:0 50%;will-change:transform">Air Freight with NO VAT</span></div>
<span class="t" id="t99" style="transform:scaleX(0.998);margin-left:-0.5px;left:203.6px;top:362.5px;font-size:9px;line-height:11.7px;font-weight:400;color:#262626;">Qty:</span>
<div style="left:219.9px;top:360.3px;width:42.2px;height:16.7px;background:#fff;border:1px solid #e2e2e2;box-sizing:border-box"></div>
<span class="t" id="t100" style="transform:scaleX(1.052);margin-left:-0.5px;left:238.6px;top:362.5px;font-size:9px;line-height:11.7px;font-weight:700;color:#222;">1000</span>
<div style="left:262.8px;top:360.3px;width:42.2px;height:16.7px;background:#fff;border:1px solid #e2e2e2;box-sizing:border-box"></div>
<span class="t" id="t101" style="transform:scaleX(1.052);margin-left:-0.5px;left:281.6px;top:362.5px;font-size:9px;line-height:11.7px;font-weight:700;color:#222;">1000</span>
<span class="t" id="t102" style="transform:scaleX(0.994);margin-left:-0.5px;left:305.7px;top:362.5px;font-size:9px;line-height:11.7px;font-weight:400;color:#262626;">Rate:</span>
<div style="left:326.9px;top:360.3px;width:48.8px;height:16.7px;background:#fff;border:1px solid #e2e2e2;box-sizing:border-box"></div>
<span class="t" id="t103" style="transform:scaleX(1.132);margin-left:-0.5px;left:368.0px;top:362.5px;font-size:9px;line-height:11.7px;font-weight:700;color:#222;">1</span>
<div style="left:376.2px;top:360.3px;width:48.0px;height:16.7px;background:#fff;border:1px solid #e2e2e2;box-sizing:border-box"></div>
<span class="t" id="t104" style="transform:scaleX(1.052);margin-left:-0.5px;left:400.6px;top:362.5px;font-size:9px;line-height:11.7px;font-weight:700;color:#7d3a8a;">1000</span>
<div style="left:425.1px;top:360.3px;width:47.9px;height:16.7px;background:#fff;border:1px solid #e2e2e2;box-sizing:border-box"></div>
<span class="t" id="t105" style="transform:scaleX(1.052);margin-left:-0.5px;left:449.4px;top:362.5px;font-size:9px;line-height:11.7px;font-weight:700;color:#2a683a;">1000</span>
<div style="left:474.0px;top:360.3px;width:47.9px;height:16.7px;background:#fff;border:1px solid #e2e2e2;box-sizing:border-box"></div>
<span class="t" id="t106" style="transform:scaleX(1.272);margin-left:-0.5px;left:513.0px;top:362.5px;font-size:9px;line-height:11.7px;font-weight:700;color:#3a3aa0;">0</span>
<span class="t" id="t107" style="left:522.8px;top:362.5px;font-size:9px;line-height:11.7px;font-weight:400;color:#262626;">Fixed</span>
<div style="left:0.0px;top:387.5px;width:11.0px;height:10.0px;background:#fff;border:1px solid #555;box-sizing:border-box"></div>
<div style="left:15.7px;top:384.3px;width:75.3px;height:16.7px;background:#fff;border:1px solid #e2e2e2;box-sizing:border-box"></div>
<div style="left:76.4px;top:386.0px;width:1.0px;height:13.3px;background:#ececec"></div>
<svg style="left:79.8px;top:388.6px;width:7px;height:8px" viewBox="0 0 7 8"><path d="M0.8 0.9L3.5 3.1 6.2 0.9M0.8 4.6L3.5 6.8 6.2 4.6" fill="none" stroke="#333" stroke-width="1.5"/></svg>
<div style="left:18px;top:386px;width:58px;height:13.3px;overflow:hidden;"><span style="position:absolute;left:0.8px;top:1.50px;font-size:9px;line-height:11.7px;font-weight:700;color:#222;white-space:nowrap;transform:scaleX(0.93);transform-origin:0 50%;will-change:transform">for test 8888</span></div>
<svg style="left:91.9px;top:386.6px;width:12px;height:12px" viewBox="0 0 12 12"><path d="M8.6 9.4A5 5 0 1 1 9.7 3.2" fill="none" stroke="#8493bb" stroke-width="1.05"/><path d="M10.2 0.8V4.9H6.1" fill="none" stroke="#8493bb" stroke-width="1.05"/></svg>
<div style="left:106.3px;top:384.3px;width:96.6px;height:16.7px;background:#fff;border:1px solid #e2e2e2;box-sizing:border-box"></div>
<div style="left:109px;top:386px;width:93px;height:13.3px;overflow:hidden;"><span style="position:absolute;left:1px;top:1.50px;font-size:9px;line-height:11.7px;font-weight:700;color:#222;white-space:nowrap;transform:scaleX(0.93);transform-origin:0 50%;will-change:transform">for test 8888</span></div>
<span class="t" id="t108" style="transform:scaleX(0.998);margin-left:-0.5px;left:203.6px;top:386.5px;font-size:9px;line-height:11.7px;font-weight:400;color:#262626;">Qty:</span>
<div style="left:219.9px;top:384.3px;width:42.2px;height:16.7px;background:#fff;border:1px solid #e2e2e2;box-sizing:border-box"></div>
<span class="t" id="t109" style="transform:scaleX(1.052);margin-left:-0.5px;left:238.6px;top:386.5px;font-size:9px;line-height:11.7px;font-weight:700;color:#222;">1000</span>
<div style="left:262.8px;top:384.3px;width:42.2px;height:16.7px;background:#fff;border:1px solid #e2e2e2;box-sizing:border-box"></div>
<span class="t" id="t110" style="transform:scaleX(1.052);margin-left:-0.5px;left:281.6px;top:386.5px;font-size:9px;line-height:11.7px;font-weight:700;color:#222;">1000</span>
<span class="t" id="t111" style="transform:scaleX(0.994);margin-left:-0.5px;left:305.7px;top:386.5px;font-size:9px;line-height:11.7px;font-weight:400;color:#262626;">Rate:</span>
<div style="left:326.9px;top:384.3px;width:48.8px;height:16.7px;background:#fff;border:1px solid #e2e2e2;box-sizing:border-box"></div>
<span class="t" id="t112" style="transform:scaleX(1.132);margin-left:-0.5px;left:368.0px;top:386.5px;font-size:9px;line-height:11.7px;font-weight:700;color:#222;">2</span>
<div style="left:376.2px;top:384.3px;width:48.0px;height:16.7px;background:#fff;border:1px solid #e2e2e2;box-sizing:border-box"></div>
<span class="t" id="t113" style="transform:scaleX(1.052);margin-left:-0.5px;left:400.6px;top:386.5px;font-size:9px;line-height:11.7px;font-weight:700;color:#7d3a8a;">2000</span>
<div style="left:425.1px;top:384.3px;width:47.9px;height:16.7px;background:#fff;border:1px solid #e2e2e2;box-sizing:border-box"></div>
<span class="t" id="t114" style="transform:scaleX(1.052);margin-left:-0.5px;left:449.4px;top:386.5px;font-size:9px;line-height:11.7px;font-weight:700;color:#2a683a;">2000</span>
<div style="left:474.0px;top:384.3px;width:47.9px;height:16.7px;background:#fff;border:1px solid #e2e2e2;box-sizing:border-box"></div>
<span class="t" id="t115" style="transform:scaleX(1.272);margin-left:-0.5px;left:513.0px;top:386.5px;font-size:9px;line-height:11.7px;font-weight:700;color:#3a3aa0;">0</span>
<span class="t" id="t116" style="left:522.8px;top:386.5px;font-size:9px;line-height:11.7px;font-weight:400;color:#262626;">Fixed</span>
<div style="left:0.0px;top:411.5px;width:11.0px;height:10.0px;background:#fff;border:1px solid #555;box-sizing:border-box"></div>
<div style="left:15.7px;top:408.3px;width:75.3px;height:16.7px;background:#fff;border:1px solid #e2e2e2;box-sizing:border-box"></div>
<div style="left:76.4px;top:410.0px;width:1.0px;height:13.3px;background:#ececec"></div>
<svg style="left:79.8px;top:412.6px;width:7px;height:8px" viewBox="0 0 7 8"><path d="M0.8 0.9L3.5 3.1 6.2 0.9M0.8 4.6L3.5 6.8 6.2 4.6" fill="none" stroke="#333" stroke-width="1.5"/></svg>
<div style="left:18px;top:410px;width:58px;height:13.3px;overflow:hidden;"><span style="position:absolute;left:0.8px;top:1.50px;font-size:9px;line-height:11.7px;font-weight:700;color:#222;white-space:nowrap;transform:scaleX(0.93);transform-origin:0 50%;will-change:transform">Air Freight wit</span></div>
<svg style="left:91.9px;top:410.6px;width:12px;height:12px" viewBox="0 0 12 12"><path d="M8.6 9.4A5 5 0 1 1 9.7 3.2" fill="none" stroke="#8493bb" stroke-width="1.05"/><path d="M10.2 0.8V4.9H6.1" fill="none" stroke="#8493bb" stroke-width="1.05"/></svg>
<div style="left:106.3px;top:408.3px;width:96.6px;height:16.7px;background:#fff;border:1px solid #e2e2e2;box-sizing:border-box"></div>
<div style="left:109px;top:410px;width:93px;height:13.3px;overflow:hidden;"><span style="position:absolute;left:1px;top:1.50px;font-size:9px;line-height:11.7px;font-weight:700;color:#222;white-space:nowrap;transform:scaleX(0.93);transform-origin:0 50%;will-change:transform">Air Freight with VAT</span></div>
<span class="t" id="t117" style="transform:scaleX(0.998);margin-left:-0.5px;left:203.6px;top:410.5px;font-size:9px;line-height:11.7px;font-weight:400;color:#262626;">Qty:</span>
<div style="left:219.9px;top:408.3px;width:42.2px;height:16.7px;background:#fff;border:1px solid #e2e2e2;box-sizing:border-box"></div>
<span class="t" id="t118" style="transform:scaleX(1.052);margin-left:-0.5px;left:238.6px;top:410.5px;font-size:9px;line-height:11.7px;font-weight:700;color:#222;">1000</span>
<div style="left:262.8px;top:408.3px;width:42.2px;height:16.7px;background:#fff;border:1px solid #e2e2e2;box-sizing:border-box"></div>
<span class="t" id="t119" style="transform:scaleX(1.052);margin-left:-0.5px;left:281.6px;top:410.5px;font-size:9px;line-height:11.7px;font-weight:700;color:#222;">1000</span>
<span class="t" id="t120" style="transform:scaleX(0.994);margin-left:-0.5px;left:305.7px;top:410.5px;font-size:9px;line-height:11.7px;font-weight:400;color:#262626;">Rate:</span>
<div style="left:326.9px;top:408.3px;width:48.8px;height:16.7px;background:#fff;border:1px solid #e2e2e2;box-sizing:border-box"></div>
<div style="left:376.2px;top:408.3px;width:48.0px;height:16.7px;background:#fff;border:1px solid #e2e2e2;box-sizing:border-box"></div>
<div style="left:425.1px;top:408.3px;width:47.9px;height:16.7px;background:#fff;border:1px solid #e2e2e2;box-sizing:border-box"></div>
<div style="left:474.0px;top:408.3px;width:47.9px;height:16.7px;background:#fff;border:1px solid #e2e2e2;box-sizing:border-box"></div>
<span class="t" id="t121" style="left:522.8px;top:410.5px;font-size:9px;line-height:11.7px;font-weight:400;color:#262626;">Fixed</span>
<span class="t" id="t122" style="transform:scaleX(1.083);margin-left:-0.5px;left:3.4px;top:432.5px;font-size:8.5px;line-height:11.1px;font-weight:400;color:#262626;">Description:</span>
<div style="left:88.5px;top:433.8px;width:1352.2px;height:28.9px;background:#fff;border:1px solid #e2e2e2;box-sizing:border-box"></div>
<div style="left:544.2px;top:72.0px;width:863.1px;height:525.4px;background:#fff;border:1px solid #5a5a5a;box-sizing:border-box;box-shadow:1px 5px 9px 1px rgba(0,0,0,0.38)"></div>
<div style="left:545.2px;top:73.0px;width:861.1px;height:22.8px;background:#b5b8bb;border-bottom:1px solid #555;box-sizing:border-box"></div>
<span class="t" id="t123" style="transform:scaleX(0.981);margin-left:-0.5px;left:568.5px;top:78.5px;font-size:9px;line-height:11.7px;font-weight:700;color:#111;">Rate sheets</span>
<div style="left:1356.4px;top:85.3px;width:8.3px;height:1.7px;background:#3a3a3a"></div>
<div style="left:1373.0px;top:79.2px;width:8.0px;height:7.6px;border:1.3px solid #111;border-top-width:2.5px;border-radius:1px;box-sizing:border-box"></div>
<svg style="left:1387.5px;top:79.0px;width:8.5px;height:8.5px" viewBox="0 0 8.5 8.5"><path d="M1 1L7.5 7.5M7.5 1L1 7.5" stroke="#111" stroke-width="1.7"/></svg>
<div style="left:547.0px;top:97.8px;width:857.6px;height:242.2px;border:1px solid #8f8f8f;box-sizing:border-box;background:#fff"></div>
<div style="left:548.0px;top:98.8px;width:855.6px;height:17.0px;background:#f0f0f0"></div>
<div style="left:548.0px;top:114.8px;width:855.6px;height:1.0px;background:#a09890"></div>
<div style="left:548.0px;top:136.7px;width:855.6px;height:18.6px;background:#fafafa"></div>
<div style="left:548.0px;top:175.8px;width:855.6px;height:18.6px;background:#fafafa"></div>
<div style="left:548.0px;top:214.9px;width:855.6px;height:18.5px;background:#fafafa"></div>
<div style="left:548.0px;top:254.0px;width:855.6px;height:18.5px;background:#fafafa"></div>
<div style="left:548.0px;top:293.1px;width:855.6px;height:18.6px;background:#fafafa"></div>
<div style="left:548.0px;top:155.2px;width:855.6px;height:1.0px;background:#e6e6e6"></div>
<div style="left:548.0px;top:174.8px;width:855.6px;height:1.0px;background:#e6e6e6"></div>
<div style="left:548.0px;top:194.3px;width:855.6px;height:1.0px;background:#e6e6e6"></div>
<div style="left:548.0px;top:213.9px;width:855.6px;height:1.0px;background:#e6e6e6"></div>
<div style="left:548.0px;top:233.4px;width:855.6px;height:1.0px;background:#e6e6e6"></div>
<div style="left:548.0px;top:253.0px;width:855.6px;height:1.0px;background:#e6e6e6"></div>
<div style="left:548.0px;top:272.5px;width:855.6px;height:1.0px;background:#e6e6e6"></div>
<div style="left:548.0px;top:292.1px;width:855.6px;height:1.0px;background:#e6e6e6"></div>
<div style="left:548.0px;top:311.6px;width:855.6px;height:1.0px;background:#e6e6e6"></div>
<div style="left:548.0px;top:331.1px;width:855.6px;height:1.0px;background:#e6e6e6"></div>
<div style="left:592.9px;top:98.8px;width:1.0px;height:16.2px;background:#a8a8a8"></div>
<div style="left:592.9px;top:115.8px;width:1.0px;height:223.2px;background:#e2e2e2"></div>
<div style="left:638.7px;top:98.8px;width:1.0px;height:16.2px;background:#a8a8a8"></div>
<div style="left:638.7px;top:115.8px;width:1.0px;height:223.2px;background:#e2e2e2"></div>
<div style="left:684.6px;top:98.8px;width:1.0px;height:16.2px;background:#a8a8a8"></div>
<div style="left:684.6px;top:115.8px;width:1.0px;height:223.2px;background:#e2e2e2"></div>
<div style="left:730.4px;top:98.8px;width:1.0px;height:16.2px;background:#a8a8a8"></div>
<div style="left:730.4px;top:115.8px;width:1.0px;height:223.2px;background:#e2e2e2"></div>
<div style="left:776.3px;top:98.8px;width:1.0px;height:16.2px;background:#a8a8a8"></div>
<div style="left:776.3px;top:115.8px;width:1.0px;height:223.2px;background:#e2e2e2"></div>
<div style="left:822.2px;top:98.8px;width:1.0px;height:16.2px;background:#a8a8a8"></div>
<div style="left:822.2px;top:115.8px;width:1.0px;height:223.2px;background:#e2e2e2"></div>
<div style="left:868.0px;top:98.8px;width:1.0px;height:16.2px;background:#a8a8a8"></div>
<div style="left:868.0px;top:115.8px;width:1.0px;height:223.2px;background:#e2e2e2"></div>
<div style="left:913.9px;top:98.8px;width:1.0px;height:16.2px;background:#a8a8a8"></div>
<div style="left:913.9px;top:115.8px;width:1.0px;height:223.2px;background:#e2e2e2"></div>
<div style="left:959.7px;top:98.8px;width:1.0px;height:16.2px;background:#a8a8a8"></div>
<div style="left:959.7px;top:115.8px;width:1.0px;height:223.2px;background:#e2e2e2"></div>
<div style="left:1005.6px;top:98.8px;width:1.0px;height:16.2px;background:#a8a8a8"></div>
<div style="left:1005.6px;top:115.8px;width:1.0px;height:223.2px;background:#e2e2e2"></div>
<div style="left:1051.5px;top:98.8px;width:1.0px;height:16.2px;background:#a8a8a8"></div>
<div style="left:1051.5px;top:115.8px;width:1.0px;height:223.2px;background:#e2e2e2"></div>
<div style="left:1097.3px;top:98.8px;width:1.0px;height:16.2px;background:#a8a8a8"></div>
<div style="left:1097.3px;top:115.8px;width:1.0px;height:223.2px;background:#e2e2e2"></div>
<div style="left:1143.2px;top:98.8px;width:1.0px;height:16.2px;background:#a8a8a8"></div>
<div style="left:1143.2px;top:115.8px;width:1.0px;height:223.2px;background:#e2e2e2"></div>
<div style="left:1189.0px;top:98.8px;width:1.0px;height:16.2px;background:#a8a8a8"></div>
<div style="left:1189.0px;top:115.8px;width:1.0px;height:223.2px;background:#e2e2e2"></div>
<div style="left:1234.9px;top:98.8px;width:1.0px;height:16.2px;background:#a8a8a8"></div>
<div style="left:1234.9px;top:115.8px;width:1.0px;height:223.2px;background:#e2e2e2"></div>
<div style="left:1289.0px;top:98.8px;width:1.0px;height:16.2px;background:#a8a8a8"></div>
<div style="left:1289.0px;top:115.8px;width:1.0px;height:223.2px;background:#e2e2e2"></div>
<div style="left:548.0px;top:115.6px;width:855.6px;height:21.6px;background:#a9c7ee;border:1.5px solid #3b7ddc;box-sizing:border-box"></div>
<div style="left:592.9px;top:117.0px;width:1.0px;height:18.8px;background:#cddff6"></div>
<div style="left:638.7px;top:117.0px;width:1.0px;height:18.8px;background:#cddff6"></div>
<div style="left:684.6px;top:117.0px;width:1.0px;height:18.8px;background:#cddff6"></div>
<div style="left:730.4px;top:117.0px;width:1.0px;height:18.8px;background:#cddff6"></div>
<div style="left:776.3px;top:117.0px;width:1.0px;height:18.8px;background:#cddff6"></div>
<div style="left:822.2px;top:117.0px;width:1.0px;height:18.8px;background:#cddff6"></div>
<div style="left:868.0px;top:117.0px;width:1.0px;height:18.8px;background:#cddff6"></div>
<div style="left:913.9px;top:117.0px;width:1.0px;height:18.8px;background:#cddff6"></div>
<div style="left:959.7px;top:117.0px;width:1.0px;height:18.8px;background:#cddff6"></div>
<div style="left:1005.6px;top:117.0px;width:1.0px;height:18.8px;background:#cddff6"></div>
<div style="left:1051.5px;top:117.0px;width:1.0px;height:18.8px;background:#cddff6"></div>
<div style="left:1097.3px;top:117.0px;width:1.0px;height:18.8px;background:#cddff6"></div>
<div style="left:1143.2px;top:117.0px;width:1.0px;height:18.8px;background:#cddff6"></div>
<div style="left:1189.0px;top:117.0px;width:1.0px;height:18.8px;background:#cddff6"></div>
<div style="left:1234.9px;top:117.0px;width:1.0px;height:18.8px;background:#cddff6"></div>
<div style="left:1289.0px;top:117.0px;width:1.0px;height:18.8px;background:#cddff6"></div>
<span class="t" id="t124" style="left:553.0px;top:101.5px;font-size:8.5px;line-height:11.1px;font-weight:700;color:#111;">Name</span>
<span class="t" id="t125" style="left:553.0px;top:121.5px;font-size:8.8px;line-height:11.4px;font-weight:400;color:#1a1a1a;">testfinal</span>
<span class="t" id="t126" style="left:598.9px;top:101.5px;font-size:8.5px;line-height:11.1px;font-weight:700;color:#111;">Number</span>
<span class="t" id="t127" style="left:598.9px;top:121.5px;font-size:8.8px;line-height:11.4px;font-weight:400;color:#1a1a1a;">vika</span>
<span class="t" id="t128" style="left:644.7px;top:101.5px;font-size:8.5px;line-height:11.1px;font-weight:700;color:#111;">Type</span>
<span class="t" id="t129" style="left:644.7px;top:121.5px;font-size:8.8px;line-height:11.4px;font-weight:400;color:#1a1a1a;">TARIFF</span>
<span class="t" id="t130" style="left:690.6px;top:101.5px;font-size:8.5px;line-height:11.1px;font-weight:700;color:#111;">Charg...</span>
<span class="t" id="t131" style="left:690.6px;top:121.5px;font-size:8.8px;line-height:11.4px;font-weight:400;color:#1a1a1a;">both</span>
<span class="t" id="t132" style="left:736.4px;top:101.5px;font-size:8.5px;line-height:11.1px;font-weight:700;color:#111;">Fr.Coll...</span>
<span class="t" id="t133" style="left:736.4px;top:121.5px;font-size:8.8px;line-height:11.4px;font-weight:400;color:#1a1a1a;">0</span>
<span class="t" id="t134" style="left:782.3px;top:101.5px;font-size:8.5px;line-height:11.1px;font-weight:700;color:#111;">Deck</span>
<span class="t" id="t135" style="left:782.3px;top:121.5px;font-size:8.8px;line-height:11.4px;font-weight:400;color:#1a1a1a;">LD</span>
<span class="t" id="t136" style="left:828.2px;top:101.5px;font-size:8.5px;line-height:11.1px;font-weight:700;color:#111;">From ...</span>
<span class="t" id="t137" style="left:828.2px;top:121.5px;font-size:8.8px;line-height:11.4px;font-weight:400;color:#1a1a1a;">800.00</span>
<span class="t" id="t138" style="left:874.0px;top:101.5px;font-size:8.5px;line-height:11.1px;font-weight:700;color:#111;">From</span>
<span class="t" id="t139" style="left:874.0px;top:121.5px;font-size:8.8px;line-height:11.4px;font-weight:400;color:#1a1a1a;">UKOO</span>
<span class="t" id="t140" style="left:919.9px;top:101.5px;font-size:8.5px;line-height:11.1px;font-weight:700;color:#111;">To</span>
<span class="t" id="t141" style="left:919.9px;top:121.5px;font-size:8.8px;line-height:11.4px;font-weight:400;color:#1a1a1a;">UKKK</span>
<span class="t" id="t142" style="left:965.7px;top:101.5px;font-size:8.5px;line-height:11.1px;font-weight:700;color:#111;">Rate</span>
<span class="t" id="t143" style="left:965.7px;top:121.5px;font-size:8.8px;line-height:11.4px;font-weight:400;color:#1a1a1a;">10.00000</span>
<span class="t" id="t144" style="left:1011.6px;top:101.5px;font-size:8.5px;line-height:11.1px;font-weight:700;color:#111;">Min ch...</span>
<span class="t" id="t145" style="left:1011.6px;top:121.5px;font-size:8.8px;line-height:11.4px;font-weight:400;color:#1a1a1a;">10.00</span>
<span class="t" id="t146" style="left:1057.5px;top:101.5px;font-size:8.5px;line-height:11.1px;font-weight:700;color:#111;">Cur</span>
<span class="t" id="t147" style="left:1057.5px;top:121.5px;font-size:8.8px;line-height:11.4px;font-weight:400;color:#1a1a1a;">USD</span>
<span class="t" id="t148" style="left:1103.3px;top:101.5px;font-size:8.5px;line-height:11.1px;font-weight:700;color:#111;">Suppl</span>
<span class="t" id="t149" style="left:1103.3px;top:121.5px;font-size:8.8px;line-height:11.4px;font-weight:400;color:#1a1a1a;">Fly Dubai</span>
<span class="t" id="t150" style="left:1149.2px;top:101.5px;font-size:8.5px;line-height:11.1px;font-weight:700;color:#111;">Total</span>
<span class="t" id="t151" style="left:1149.2px;top:121.5px;font-size:8.8px;line-height:11.4px;font-weight:400;color:#1a1a1a;">10000</span>
<span class="t" id="t152" style="left:1195.0px;top:101.5px;font-size:8.5px;line-height:11.1px;font-weight:700;color:#111;">Notes</span>
<span class="t" id="t153" style="left:1195.0px;top:121.5px;font-size:8.8px;line-height:11.4px;font-weight:400;color:#1a1a1a;">vikatest</span>
<span class="t" id="t154" style="left:1240.9px;top:101.5px;font-size:8.5px;line-height:11.1px;font-weight:700;color:#111;">Rate</span>
<span class="t" id="t155" style="left:1295.0px;top:101.5px;font-size:8.5px;line-height:11.1px;font-weight:700;color:#111;">Surcharges</span>
<svg style="left:1240.5px;top:121.0px;width:11px;height:11px" viewBox="0 0 11 11"><path d="M1 6.2L4.2 9.3 10.6 2.6" fill="none" stroke="#2aa336" stroke-width="1.5"/></svg>
<svg style="left:1295.0px;top:121.5px;width:10px;height:10px" viewBox="0 0 10 10"><rect x="0.5" y="0.5" width="4" height="4" fill="none" stroke="#c9c9c9" stroke-width="1"/><rect x="5.5" y="0.5" width="4" height="4" fill="none" stroke="#c9c9c9" stroke-width="1"/><rect x="0.5" y="5.5" width="4" height="4" fill="none" stroke="#c9c9c9" stroke-width="1"/><rect x="5.5" y="5.5" width="4" height="4" fill="none" stroke="#c9c9c9" stroke-width="1"/></svg>
<span class="t" id="t156" style="transform:scaleX(1.003);margin-left:-0.5px;left:1309.4px;top:120.5px;font-size:8.8px;line-height:11.4px;font-weight:400;color:#222;">Show Surcharges</span>
<span class="t" id="t157" style="transform:scaleX(0.990);margin-left:-0.5px;left:952.6px;top:339.5px;font-size:8.5px;line-height:11.1px;font-weight:700;color:#222;">Surcharges</span>
<svg style="left:940.0px;top:348.0px;width:72px;height:8px" viewBox="0 0 72 8"><path d="M3 3.4Q35 4.6 68.6 4.5" fill="none" stroke="#ff0000" stroke-width="2.9" stroke-linecap="round"/></svg>
<div style="left:547.0px;top:351.9px;width:857.6px;height:241.0px;border:1px solid #8f8f8f;box-sizing:border-box;background:#fff"></div>
<div style="left:548.0px;top:352.9px;width:855.6px;height:16.6px;background:#f0f0f0"></div>
<div style="left:548.0px;top:368.7px;width:855.6px;height:1.0px;background:#8f8f8f"></div>
<div style="left:548.0px;top:389.4px;width:855.6px;height:18.6px;background:#fafafa"></div>
<div style="left:548.0px;top:428.6px;width:855.6px;height:18.6px;background:#fafafa"></div>
<div style="left:548.0px;top:467.8px;width:855.6px;height:18.6px;background:#fafafa"></div>
<div style="left:548.0px;top:507.0px;width:855.6px;height:18.6px;background:#fafafa"></div>
<div style="left:548.0px;top:546.2px;width:855.6px;height:18.6px;background:#fafafa"></div>
<div style="left:548.0px;top:388.4px;width:855.6px;height:1.0px;background:#e6e6e6"></div>
<div style="left:548.0px;top:408.0px;width:855.6px;height:1.0px;background:#e6e6e6"></div>
<div style="left:548.0px;top:427.6px;width:855.6px;height:1.0px;background:#e6e6e6"></div>
<div style="left:548.0px;top:447.2px;width:855.6px;height:1.0px;background:#e6e6e6"></div>
<div style="left:548.0px;top:466.8px;width:855.6px;height:1.0px;background:#e6e6e6"></div>
<div style="left:548.0px;top:486.4px;width:855.6px;height:1.0px;background:#e6e6e6"></div>
<div style="left:548.0px;top:506.0px;width:855.6px;height:1.0px;background:#e6e6e6"></div>
<div style="left:548.0px;top:525.6px;width:855.6px;height:1.0px;background:#e6e6e6"></div>
<div style="left:548.0px;top:545.2px;width:855.6px;height:1.0px;background:#e6e6e6"></div>
<div style="left:548.0px;top:564.8px;width:855.6px;height:1.0px;background:#e6e6e6"></div>
<div style="left:548.0px;top:584.4px;width:855.6px;height:1.0px;background:#e6e6e6"></div>
<div style="left:640.5px;top:352.9px;width:1.0px;height:15.8px;background:#a0a0a0"></div>
<div style="left:640.5px;top:369.7px;width:1.0px;height:222.2px;background:#ebebeb"></div>
<div style="left:712.9px;top:352.9px;width:1.0px;height:15.8px;background:#a0a0a0"></div>
<div style="left:712.9px;top:369.7px;width:1.0px;height:222.2px;background:#ebebeb"></div>
<div style="left:745.9px;top:352.9px;width:1.0px;height:15.8px;background:#a0a0a0"></div>
<div style="left:745.9px;top:369.7px;width:1.0px;height:222.2px;background:#ebebeb"></div>
<div style="left:802.9px;top:352.9px;width:1.0px;height:15.8px;background:#a0a0a0"></div>
<div style="left:802.9px;top:369.7px;width:1.0px;height:222.2px;background:#ebebeb"></div>
<div style="left:837.9px;top:352.9px;width:1.0px;height:15.8px;background:#a0a0a0"></div>
<div style="left:837.9px;top:369.7px;width:1.0px;height:222.2px;background:#ebebeb"></div>
<div style="left:939.0px;top:352.9px;width:1.0px;height:15.8px;background:#a0a0a0"></div>
<div style="left:939.0px;top:369.7px;width:1.0px;height:222.2px;background:#ebebeb"></div>
<div style="left:1020.5px;top:352.9px;width:1.0px;height:15.8px;background:#a0a0a0"></div>
<div style="left:1020.5px;top:369.7px;width:1.0px;height:222.2px;background:#ebebeb"></div>
<div style="left:1051.9px;top:352.9px;width:1.0px;height:15.8px;background:#a0a0a0"></div>
<div style="left:1051.9px;top:369.7px;width:1.0px;height:222.2px;background:#ebebeb"></div>
<div style="left:1085.8px;top:352.9px;width:1.0px;height:15.8px;background:#a0a0a0"></div>
<div style="left:1085.8px;top:369.7px;width:1.0px;height:222.2px;background:#ebebeb"></div>
<div style="left:1120.0px;top:352.9px;width:1.0px;height:15.8px;background:#a0a0a0"></div>
<div style="left:1120.0px;top:369.7px;width:1.0px;height:222.2px;background:#ebebeb"></div>
<div style="left:1153.1px;top:352.9px;width:1.0px;height:15.8px;background:#a0a0a0"></div>
<div style="left:1153.1px;top:369.7px;width:1.0px;height:222.2px;background:#ebebeb"></div>
<div style="left:1187.0px;top:352.9px;width:1.0px;height:15.8px;background:#a0a0a0"></div>
<div style="left:1187.0px;top:369.7px;width:1.0px;height:222.2px;background:#ebebeb"></div>
<div style="left:1224.8px;top:352.9px;width:1.0px;height:15.8px;background:#a0a0a0"></div>
<div style="left:1224.8px;top:369.7px;width:1.0px;height:222.2px;background:#ebebeb"></div>
<div style="left:1314.0px;top:352.9px;width:1.0px;height:15.8px;background:#a0a0a0"></div>
<div style="left:1314.0px;top:369.7px;width:1.0px;height:222.2px;background:#ebebeb"></div>
<span class="t" id="t158" style="left:553.0px;top:355.5px;font-size:8.5px;line-height:11.1px;font-weight:700;color:#111;">Type</span>
<span class="t" id="t159" style="left:553.0px;top:374.5px;font-size:8.8px;line-height:11.4px;font-weight:400;color:#1a1a1a;">Air Freight Charges</span>
<span class="t" id="t160" style="left:646.5px;top:355.5px;font-size:8.5px;line-height:11.1px;font-weight:700;color:#111;">Name</span>
<span class="t" id="t161" style="left:646.5px;top:374.5px;font-size:8.8px;line-height:11.4px;font-weight:400;color:#1a1a1a;">testforsurfinal</span>
<span class="t" id="t162" style="left:718.9px;top:355.5px;font-size:8.5px;line-height:11.1px;font-weight:700;color:#111;">Rat...</span>
<span class="t" id="t163" style="left:718.9px;top:374.5px;font-size:8.8px;line-height:11.4px;font-weight:400;color:#1a1a1a;">bulk</span>
<span class="t" id="t164" style="left:751.9px;top:355.5px;font-size:8.5px;line-height:11.1px;font-weight:700;color:#111;">Weight T...</span>
<span class="t" id="t165" style="left:751.9px;top:374.5px;font-size:8.8px;line-height:11.4px;font-weight:400;color:#1a1a1a;">ch_weight</span>
<span class="t" id="t166" style="left:808.9px;top:355.5px;font-size:8.5px;line-height:11.1px;font-weight:700;color:#111;">Cha...</span>
<span class="t" id="t167" style="left:808.9px;top:374.5px;font-size:8.8px;line-height:11.4px;font-weight:400;color:#1a1a1a;">both</span>
<span class="t" id="t168" style="left:843.9px;top:355.5px;font-size:8.5px;line-height:11.1px;font-weight:700;color:#111;">From</span>
<span class="t" id="t169" style="left:843.9px;top:374.5px;font-size:8.8px;line-height:11.4px;font-weight:400;color:#1a1a1a;">Odessa (UKOO, ODS)</span>
<span class="t" id="t170" style="left:945.0px;top:355.5px;font-size:8.5px;line-height:11.1px;font-weight:700;color:#111;">To</span>
<span class="t" id="t171" style="left:945.0px;top:374.5px;font-size:8.8px;line-height:11.4px;font-weight:400;color:#1a1a1a;">Kyiv (UKKK, IEV)</span>
<span class="t" id="t172" style="left:1026.5px;top:355.5px;font-size:8.5px;line-height:11.1px;font-weight:700;color:#111;">Mi...</span>
<span class="t" id="t173" style="left:1026.5px;top:374.5px;font-size:8.8px;line-height:11.4px;font-weight:400;color:#1a1a1a;">555</span>
<span class="t" id="t174" style="left:1057.9px;top:355.5px;font-size:8.5px;line-height:11.1px;font-weight:700;color:#111;">Min...</span>
<span class="t" id="t175" style="left:1057.9px;top:374.5px;font-size:8.8px;line-height:11.4px;font-weight:400;color:#1a1a1a;">0.00</span>
<span class="t" id="t176" style="left:1091.8px;top:355.5px;font-size:8.5px;line-height:11.1px;font-weight:700;color:#111;">Ch...</span>
<span class="t" id="t177" style="left:1091.8px;top:374.5px;font-size:8.8px;line-height:11.4px;font-weight:400;color:#1a1a1a;">0.00</span>
<span class="t" id="t178" style="left:1126.0px;top:355.5px;font-size:8.5px;line-height:11.1px;font-weight:700;color:#111;">Ma...</span>
<span class="t" id="t179" style="left:1126.0px;top:374.5px;font-size:8.8px;line-height:11.4px;font-weight:400;color:#1a1a1a;">0.00</span>
<span class="t" id="t180" style="left:1159.1px;top:355.5px;font-size:8.5px;line-height:11.1px;font-weight:700;color:#111;">Cur...</span>
<span class="t" id="t181" style="left:1159.1px;top:374.5px;font-size:8.8px;line-height:11.4px;font-weight:400;color:#1a1a1a;">USD</span>
<span class="t" id="t182" style="left:1193.0px;top:355.5px;font-size:8.5px;line-height:11.1px;font-weight:700;color:#111;">Sup...</span>
<span class="t" id="t183" style="left:1193.0px;top:374.5px;font-size:8.8px;line-height:11.4px;font-weight:400;color:#1a1a1a;">None</span>
<span class="t" id="t184" style="left:1230.8px;top:355.5px;font-size:8.5px;line-height:11.1px;font-weight:700;color:#111;">From date</span>
<span class="t" id="t185" style="left:1230.8px;top:374.5px;font-size:8.8px;line-height:11.4px;font-weight:400;color:#1a1a1a;">01/04/2020 00:00</span>
<span class="t" id="t186" style="left:1320.0px;top:355.5px;font-size:8.5px;line-height:11.1px;font-weight:700;color:#111;">To date</span>
<span class="t" id="t187" style="left:1320.0px;top:374.5px;font-size:8.8px;line-height:11.4px;font-weight:400;color:#1a1a1a;">31/07/2020 00:00</span>
<svg style="left:1394.5px;top:585.0px;width:9px;height:9px" viewBox="0 0 9 9"><path d="M1 1H3.8M1 1V3.8M1 1L3.6 3.6M8 1H5.2M8 1V3.8M8 1L5.4 3.6M1 8H3.8M1 8V5.2M1 8L3.6 5.4M8 8H5.2M8 8V5.2M8 8L5.4 5.4" fill="none" stroke="#111" stroke-width="1.2"/></svg>
</div></body></html>
